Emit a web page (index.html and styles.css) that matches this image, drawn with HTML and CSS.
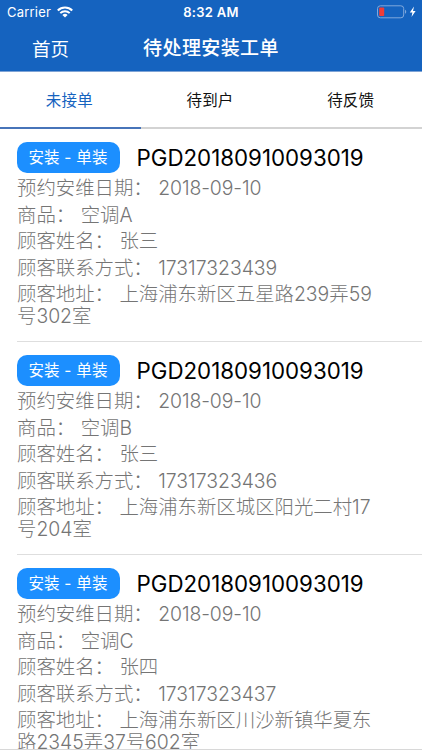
FILE: index.html
```html
<!DOCTYPE html>
<html lang="zh-CN">
<head>
<meta charset="utf-8">
<title>待处理安装工单</title>
<link rel="stylesheet" href="styles.css">
</head>
<body>
<div class="screen">
  <header class="top">
    <div class="status">
      <div class="carrier"><span>Carrier</span>
        <svg width="16" height="12" viewBox="0 0 16 12" fill="none" stroke="#fff"><path d="M.8 4.5a10.3 10.3 0 0 1 14.4 0" stroke-width="2.1"/><path d="M3.3 7.1a6.7 6.7 0 0 1 9.4 0" stroke-width="2"/><path d="M8 11.6 5.4 9a3.7 3.7 0 0 1 5.2 0z" fill="#fff" stroke="none"/></svg>
      </div>
      <div class="time">8:32 AM</div>
      <svg class="battery" width="40" height="14" viewBox="0 0 40 14"><rect x=".5" y=".8" width="26.2" height="12" rx="2.8" fill="none" stroke="#7fa8dc"/><rect x="2.2" y="2.5" width="5" height="8.6" rx=".8" fill="#f03c37"/><path d="M28 4.8c1.7.6 1.7 3.4 0 4z" fill="#7fa8dc"/><path d="M37 1.6 32.8 7.5h2.6l-.9 4.4 4.1-6H36z" fill="#fff"/></svg>
    </div>
    <div class="nav"><span class="back">首页</span><h1>待处理安装工单</h1></div>
  </header>
  <nav class="tabs"><div class="tab active">未接单</div><div class="tab">待到户</div><div class="tab">待反馈</div></nav>
  <main class="list">
    <article class="order">
      <div class="head"><span class="badge">安装 - 单装</span><span class="code">PGD20180910093019</span></div>
      <p>预约安维日期： <span class="date">2018-09-10</span></p>
      <p>商品： 空调A</p>
      <p>顾客姓名： 张三</p>
      <p>顾客联系方式： 17317323439</p>
      <p>顾客地址： 上海浦东新区五星路239弄59号302室</p>
    </article>
    <article class="order">
      <div class="head"><span class="badge">安装 - 单装</span><span class="code">PGD20180910093019</span></div>
      <p>预约安维日期： <span class="date">2018-09-10</span></p>
      <p>商品： 空调B</p>
      <p>顾客姓名： 张三</p>
      <p>顾客联系方式： 17317323436</p>
      <p>顾客地址： 上海浦东新区城区阳光二村17号204室</p>
    </article>
    <article class="order">
      <div class="head"><span class="badge">安装 - 单装</span><span class="code">PGD20180910093019</span></div>
      <p>预约安维日期： <span class="date">2018-09-10</span></p>
      <p>商品： 空调C</p>
      <p>顾客姓名： 张四</p>
      <p>顾客联系方式： 17317323437</p>
      <p>顾客地址： 上海浦东新区川沙新镇华夏东路2345弄37号602室</p>
    </article>
  </main>
</div>
</body>
</html>
```
FILE: styles.css
```css
* { box-sizing: border-box; }
body { margin: 0; background: #fff; font-family: Inter, "Noto Sans CJK SC", sans-serif; }
.screen { height: 750px; display: flex; flex-direction: column; overflow: hidden; border-bottom: 1px solid #d8d8d8; }
.top { flex: none; height: 72px; background: #1563bf; color: #fff; border-bottom: 1px solid #7ea3d5; }
.status { height: 24px; display: grid; grid-template-columns: 1fr auto 1fr; align-items: center; padding: 0 5px 0 5px; font-size: 13px; }
.carrier { display: flex; align-items: center; gap: 6px; letter-spacing: .2px; padding-left: 2px; }
.time { font-weight: 600; letter-spacing: .3px; }
.battery { justify-self: end; }
.nav { height: 47px; display: grid; grid-template-columns: 1fr auto 1fr; align-items: center; padding: 0 32px; }
.back { font-size: 18.5px; font-weight: 400; }
h1 { margin: 0; padding-top: 2px; font-size: 19px; line-height: 28px; font-weight: 500; letter-spacing: .4px; }
.tabs { flex: none; height: 57px; display: flex; }
.tab { flex: 1; padding-right: 2px; text-align: center; font-size: 15.5px; line-height: 57px; height: 57px; color: #111; border-bottom: 2px solid #d3d3d3; letter-spacing: .2px; }
.active { color: #1563bf; border-color: #4774b9; }
.list { flex: 1; min-height: 0; overflow: hidden; }
.order { height: 213px; margin-left: 17px; padding: 13px 44px 0 0; border-bottom: 1px solid #dedede; }
.head { display: flex; align-items: center; height: 31px; margin-bottom: 4.4px; }
.badge { width: 103px; height: 31px; margin-right: 16.5px; padding-right: 1px; border-radius: 10px; background: #1c8fff; color: #fff; text-align: center; font-size: 15.5px; line-height: 31px; letter-spacing: .2px; white-space: nowrap; }
.code { font-size: 22.3px; color: #000; white-space: nowrap; }
p { margin: 0 0 4px; font-size: 19.4px; line-height: 22.4px; color: #757575; font-weight: 300; }
.date { letter-spacing: -.1px; }
```
